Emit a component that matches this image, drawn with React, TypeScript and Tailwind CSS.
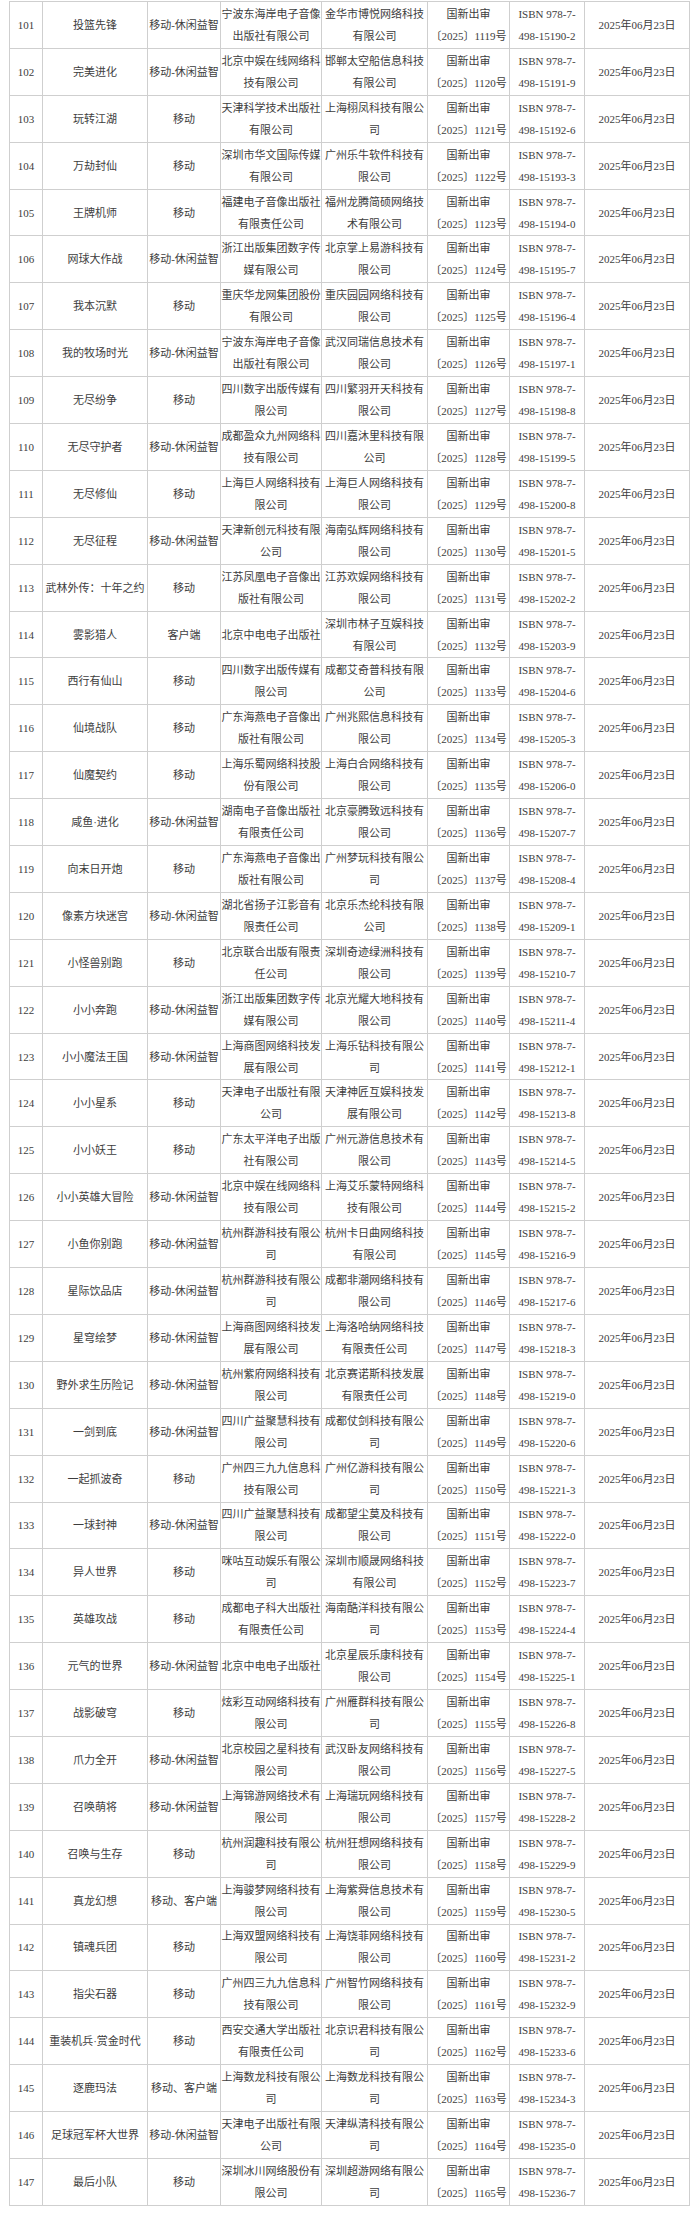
import React from 'react';

type Row = [number, string, string, string, string, string];

// [序号, 名称, 类别, 出版单位, 运营单位, ISBN尾号]
const rows: Row[] = [
    [101, '投篮先锋', '移动-休闲益智', '宁波东海岸电子音像出版社有限公司', '金华市博悦网络科技有限公司', '15190-2'],
    [102, '完美进化', '移动-休闲益智', '北京中娱在线网络科技有限公司', '邯郸太空船信息科技有限公司', '15191-9'],
    [103, '玩转江湖', '移动', '天津科学技术出版社有限公司', '上海栩凤科技有限公司', '15192-6'],
    [104, '万劫封仙', '移动', '深圳市华文国际传媒有限公司', '广州乐牛软件科技有限公司', '15193-3'],
    [105, '王牌机师', '移动', '福建电子音像出版社有限责任公司', '福州龙腾简硕网络技术有限公司', '15194-0'],
    [106, '网球大作战', '移动-休闲益智', '浙江出版集团数字传媒有限公司', '北京掌上易游科技有限公司', '15195-7'],
    [107, '我本沉默', '移动', '重庆华龙网集团股份有限公司', '重庆园园网络科技有限公司', '15196-4'],
    [108, '我的牧场时光', '移动-休闲益智', '宁波东海岸电子音像出版社有限公司', '武汉同瑞信息技术有限公司', '15197-1'],
    [109, '无尽纷争', '移动', '四川数字出版传媒有限公司', '四川繁羽开天科技有限公司', '15198-8'],
    [110, '无尽守护者', '移动-休闲益智', '成都盈众九州网络科技有限公司', '四川嘉沐里科技有限公司', '15199-5'],
    [111, '无尽修仙', '移动', '上海巨人网络科技有限公司', '上海巨人网络科技有限公司', '15200-8'],
    [112, '无尽征程', '移动-休闲益智', '天津新创元科技有限公司', '海南弘辉网络科技有限公司', '15201-5'],
    [113, '武林外传：十年之约', '移动', '江苏凤凰电子音像出版社有限公司', '江苏欢娱网络科技有限公司', '15202-2'],
    [114, '雾影猎人', '客户端', '北京中电电子出版社', '深圳市林子互娱科技有限公司', '15203-9'],
    [115, '西行有仙山', '移动', '四川数字出版传媒有限公司', '成都艾奇普科技有限公司', '15204-6'],
    [116, '仙境战队', '移动', '广东海燕电子音像出版社有限公司', '广州兆熙信息科技有限公司', '15205-3'],
    [117, '仙魔契约', '移动', '上海乐蜀网络科技股份有限公司', '上海白合网络科技有限公司', '15206-0'],
    [118, '咸鱼·进化', '移动-休闲益智', '湖南电子音像出版社有限责任公司', '北京豪腾致远科技有限公司', '15207-7'],
    [119, '向末日开炮', '移动', '广东海燕电子音像出版社有限公司', '广州梦玩科技有限公司', '15208-4'],
    [120, '像素方块迷宫', '移动-休闲益智', '湖北省扬子江影音有限责任公司', '北京乐杰纶科技有限公司', '15209-1'],
    [121, '小怪兽别跑', '移动', '北京联合出版有限责任公司', '深圳奇迹绿洲科技有限公司', '15210-7'],
    [122, '小小奔跑', '移动-休闲益智', '浙江出版集团数字传媒有限公司', '北京光耀大地科技有限公司', '15211-4'],
    [123, '小小魔法王国', '移动-休闲益智', '上海商图网络科技发展有限公司', '上海乐钻科技有限公司', '15212-1'],
    [124, '小小星系', '移动', '天津电子出版社有限公司', '天津神匠互娱科技发展有限公司', '15213-8'],
    [125, '小小妖王', '移动', '广东太平洋电子出版社有限公司', '广州元游信息技术有限公司', '15214-5'],
    [126, '小小英雄大冒险', '移动-休闲益智', '北京中娱在线网络科技有限公司', '上海艾乐蒙特网络科技有限公司', '15215-2'],
    [127, '小鱼你别跑', '移动-休闲益智', '杭州群游科技有限公司', '杭州卡日曲网络科技有限公司', '15216-9'],
    [128, '星际饮品店', '移动-休闲益智', '杭州群游科技有限公司', '成都非潮网络科技有限公司', '15217-6'],
    [129, '星穹绘梦', '移动-休闲益智', '上海商图网络科技发展有限公司', '上海洛哈纳网络科技有限责任公司', '15218-3'],
    [130, '野外求生历险记', '移动-休闲益智', '杭州紫府网络科技有限公司', '北京赛诺斯科技发展有限责任公司', '15219-0'],
    [131, '一剑到底', '移动-休闲益智', '四川广益聚慧科技有限公司', '成都仗剑科技有限公司', '15220-6'],
    [132, '一起抓波奇', '移动', '广州四三九九信息科技有限公司', '广州亿游科技有限公司', '15221-3'],
    [133, '一球封神', '移动-休闲益智', '四川广益聚慧科技有限公司', '成都望尘莫及科技有限公司', '15222-0'],
    [134, '异人世界', '移动', '咪咕互动娱乐有限公司', '深圳市顺晟网络科技有限公司', '15223-7'],
    [135, '英雄攻战', '移动', '成都电子科大出版社有限责任公司', '海南酷洋科技有限公司', '15224-4'],
    [136, '元气的世界', '移动-休闲益智', '北京中电电子出版社', '北京星辰乐康科技有限公司', '15225-1'],
    [137, '战影破穹', '移动', '炫彩互动网络科技有限公司', '广州雁群科技有限公司', '15226-8'],
    [138, '爪力全开', '移动-休闲益智', '北京校园之星科技有限公司', '武汉卧友网络科技有限公司', '15227-5'],
    [139, '召唤萌将', '移动-休闲益智', '上海锦游网络技术有限公司', '上海瑞玩网络科技有限公司', '15228-2'],
    [140, '召唤与生存', '移动', '杭州润趣科技有限公司', '杭州狂想网络科技有限公司', '15229-9'],
    [141, '真龙幻想', '移动、客户端', '上海骏梦网络科技有限公司', '上海紫舜信息技术有限公司', '15230-5'],
    [142, '镇魂兵团', '移动', '上海双盟网络科技有限公司', '上海饶菲网络科技有限公司', '15231-2'],
    [143, '指尖石器', '移动', '广州四三九九信息科技有限公司', '广州智竹网络科技有限公司', '15232-9'],
    [144, '重装机兵·赏金时代', '移动', '西安交通大学出版社有限责任公司', '北京识君科技有限公司', '15233-6'],
    [145, '逐鹿玛法', '移动、客户端', '上海数龙科技有限公司', '上海数龙科技有限公司', '15234-3'],
    [146, '足球冠军杯大世界', '移动-休闲益智', '天津电子出版社有限公司', '天津纵清科技有限公司', '15235-0'],
    [147, '最后小队', '移动', '深圳冰川网络股份有限公司', '深圳超游网络有限公司', '15236-7'],
];

// the source breaks company names every 9 characters
function chunk(text: string, size = 9): string[] {
    const out: string[] = [];
    const chars = Array.from(text);
    for (let i = 0; i < chars.length; i += size) out.push(chars.slice(i, i + size).join(''));
    return out;
}

function Cell({ w, lines }: { w: string; lines: string[] }) {
    return (
        <div className={`${w} shrink-0 h-full border-r border-[#cfcfcf] flex flex-col items-center justify-center text-center whitespace-nowrap`}>
            {lines.map((l, i) => (
                <span key={i} className="block leading-[22px]">{l}</span>
            ))}
        </div>
    );
}

export default function App() {
    return (
        <div className="w-[690px] min-h-[2227px] bg-white overflow-hidden pt-px">
            <div
                className="ml-[9px] w-[681px] border-t border-l border-[#cfcfcf] text-[11px] text-[#3d3d3d]"
                style={{ fontFamily: '"Liberation Serif", "Noto Sans CJK SC", serif' }}
            >
                {rows.map(([no, name, kind, pub, op, isbn]) => (
                    <div key={no} className="flex h-[46.9px] border-b border-[#cfcfcf]">
                        <Cell w="w-[33px]" lines={[String(no)]} />
                        <Cell w="w-[105px]" lines={[name]} />
                        <Cell w="w-[73px]" lines={[kind]} />
                        <Cell w="w-[101px]" lines={chunk(pub)} />
                        <Cell w="w-[106px]" lines={chunk(op)} />
                        <Cell w="w-[82px]" lines={['国新出审', `〔2025〕${no + 1018}号`]} />
                        <Cell w="w-[75px]" lines={['ISBN 978-7-', `498-${isbn}`]} />
                        <Cell w="w-[105px]" lines={['2025年06月23日']} />
                    </div>
                ))}
            </div>
        </div>
    );
}
